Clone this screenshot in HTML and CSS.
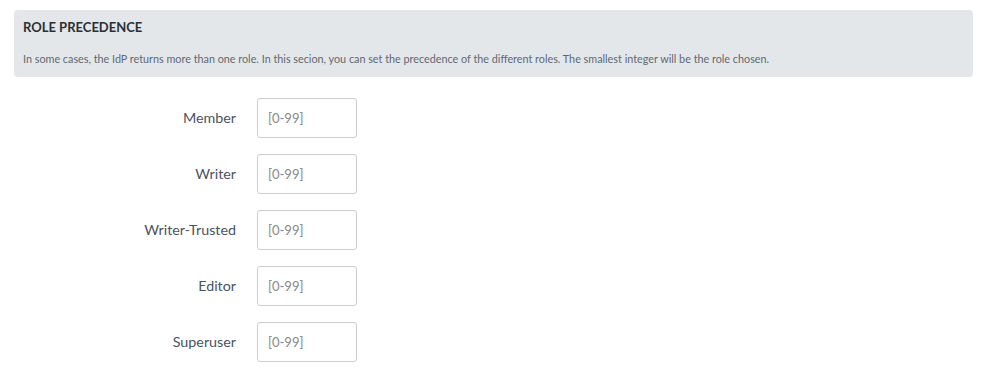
FILE: index.html
```html
<!DOCTYPE html>
<html lang="en">
<head>
    <meta charset="UTF-8">
    <meta name="viewport" content="width=device-width, initial-scale=1.0">
    <title>Role Precedence</title>
    <link rel="stylesheet" href="styles.css">
</head>
<body>
    <div class="panel">
        <h3>ROLE PRECEDENCE</h3>
        <p>In some cases, the IdP returns more than one role. In this secion, you can set the precedence of the different roles. The smallest integer will be the role chosen.</p>
    </div>

    <div class="form">
        <label for="member">Member</label>
        <input type="text" id="member" placeholder="[0-99]">

        <label for="writer">Writer</label>
        <input type="text" id="writer" placeholder="[0-99]">

        <label for="writerTrusted">Writer-Trusted</label>
        <input type="text" id="writerTrusted" placeholder="[0-99]">

        <label for="editor">Editor</label>
        <input type="text" id="editor" placeholder="[0-99]">

        <label for="superuser">Superuser</label>
        <input type="text" id="superuser" placeholder="[0-99]">
    </div>
</body>
</html>
```

FILE: styles.css
```css
body {
    font-family: Lato, "Open Sans", sans-serif;
    margin: 0;
    padding: 10px 13px 0 14px;
    background: white;
    color: #4a5360;
}
.panel {
    background: #e4e7ea;
    border-radius: 4px;
    padding: 8px 9px 11px;
}
.panel h3 {
    margin: 0;
    font-size: 13px;
    font-weight: bold;
    color: #2b2f33;
    line-height: 18px;
}
.panel p {
    margin: 16px 0 0;
    font-size: 10.8px;
    line-height: 14px;
    color: #5f6770;
}
.form {
    display: grid;
    grid-template-columns: 222px 100px;
    column-gap: 21px;
    row-gap: 16px;
    align-items: center;
    margin-top: 21px;
}
label {
    text-align: right;
    font-size: 14.3px;
    color: #4a5360;
    padding-bottom: 2px;
}
input {
    box-sizing: border-box;
    width: 100px;
    height: 40px;
    padding: 0 10px;
    border: 1px solid #ccc;
    border-radius: 3px;
    font-family: Lato, sans-serif;
    font-size: 13px;
    color: #333;
}
input::placeholder {
    color: #888;
}
```
